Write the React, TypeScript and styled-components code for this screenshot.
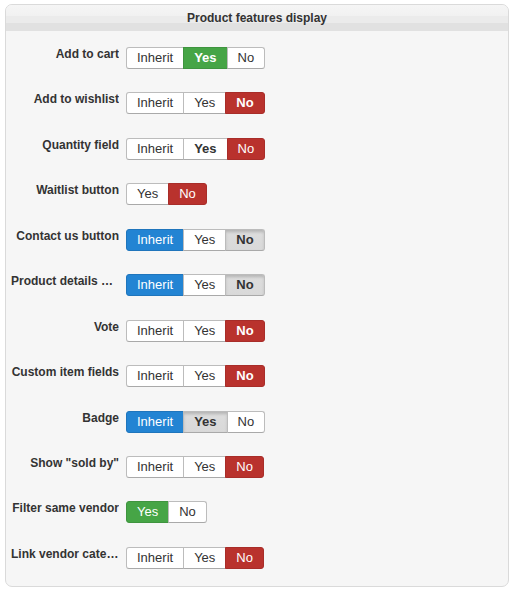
import React from "react";
import styled, { createGlobalStyle, css } from "styled-components";

const Global = createGlobalStyle`
  html, body { margin: 0; padding: 0; background: #ffffff; }
  body { font-family: "Liberation Sans", Arial, sans-serif; color: #333333; }
`;

const Page = styled.div`
  padding: 4px 4px 4px 5px;
`;

const Panel = styled.section`
  width: 504px;
  box-sizing: border-box;
  border: 1px solid #dadada;
  border-radius: 7px;
  background: #f6f6f6;
  overflow: hidden;
`;

const Header = styled.h3`
  margin: 0;
  height: 26px;
  line-height: 26px;
  text-align: center;
  font-size: 12px;
  font-weight: bold;
  color: #333333;
  background: linear-gradient(
    to bottom,
    #f5f5f5 0px,
    #f1f1f1 11px,
    #ebebeb 11px,
    #ebebeb 18px,
    #e1e1e1 18px,
    #e1e1e1 100%
  );
`;

const Body = styled.div`
  display: flex;
  flex-direction: column;
  gap: 18.45px;
  padding: 14px 0 14px 5px;
`;

const Row = styled.div`
  display: flex;
  align-items: flex-start;
  gap: 7px;
  height: 27px;
`;

const Label = styled.label`
  width: 108px;
  flex: none;
  font-size: 12px;
  line-height: 18px;
  font-weight: bold;
  color: #333333;
  text-align: right;
  white-space: nowrap;
  overflow: hidden;
  text-overflow: ellipsis;
`;

const Group = styled.div`
  display: flex;
  margin-top: 2px;
`;

type Tone = "none" | "green" | "red" | "blue" | "grey";

const tones: Record<Tone, ReturnType<typeof css>> = {
  none: css`
    background: #ffffff;
    color: #333333;
  `,
  green: css`
    background: #46a546;
    border-color: #3f943f;
    color: #ffffff;
  `,
  red: css`
    background: #b9322d;
    border-color: #a82d29;
    color: #ffffff;
  `,
  blue: css`
    background: #2384d3;
    border-color: #1f75bc;
    color: #ffffff;
  `,
  grey: css`
    background: linear-gradient(to bottom, #cfcfcf 0, #dcdcdc 4px, #d9d9d9 100%);
    box-shadow: inset 0 2px 3px rgba(0, 0, 0, 0.12);
    color: #333333;
  `,
};

const Btn = styled.button<{ $tone: Tone; $bold: boolean }>`
  font-family: "Liberation Sans", Arial, sans-serif;
  font-size: 13px;
  line-height: 20px;
  height: 22px;
  padding: 0 10px;
  margin: 0 0 0 -1px;
  border: 1px solid #bcbcbc;
  border-bottom-color: #a9a9a9;
  font-weight: ${(p) => (p.$bold ? "bold" : "normal")};
  border-radius: 0;
  cursor: pointer;
  ${(p) => tones[p.$tone]}
  &:first-child {
    margin-left: 0;
    border-radius: 3px 0 0 3px;
  }
  &:last-child {
    border-radius: 0 3px 3px 0;
  }
`;

type Opt = { label: string; tone?: Tone; bold?: boolean };
type Item = { label: string; options: Opt[] };

const I = (tone: Tone = "none", bold = false): Opt => ({ label: "Inherit", tone, bold });
const Y = (tone: Tone = "none", bold = false): Opt => ({ label: "Yes", tone, bold });
const N = (tone: Tone = "none", bold = false): Opt => ({ label: "No", tone, bold });

const items: Item[] = [
  { label: "Add to cart", options: [I(), Y("green", true), N()] },
  { label: "Add to wishlist", options: [I(), Y(), N("red", true)] },
  { label: "Quantity field", options: [I(), Y("none", true), N("red")] },
  { label: "Waitlist button", options: [Y(), N("red")] },
  { label: "Contact us button", options: [I("blue"), Y(), N("grey", true)] },
  { label: "Product details page", options: [I("blue"), Y(), N("grey", true)] },
  { label: "Vote", options: [I(), Y(), N("red", true)] },
  { label: "Custom item fields", options: [I(), Y(), N("red", true)] },
  { label: "Badge", options: [I("blue"), Y("grey", true), N()] },
  { label: 'Show "sold by"', options: [I(), Y(), N("red")] },
  { label: "Filter same vendor", options: [Y("green"), N()] },
  { label: "Link vendor category", options: [I(), Y(), N("red")] },
];

export default function App() {
  return (
    <Page>
      <Global />
      <Panel>
        <Header>Product features display</Header>
        <Body>
          {items.map((it) => (
            <Row key={it.label}>
              <Label title={it.label}>{it.label}</Label>
              <Group>
                {it.options.map((o) => (
                  <Btn key={o.label} $tone={o.tone ?? "none"} $bold={!!o.bold}>
                    {o.label}
                  </Btn>
                ))}
              </Group>
            </Row>
          ))}
        </Body>
      </Panel>
    </Page>
  );
}
